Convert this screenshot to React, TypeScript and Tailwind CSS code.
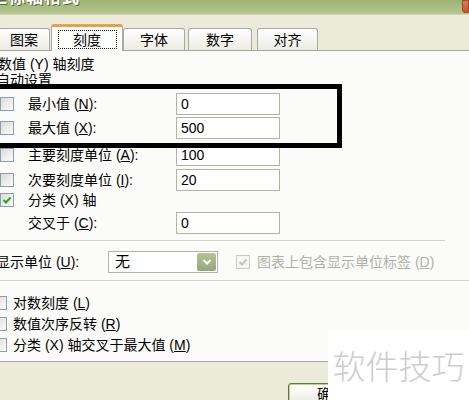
import React from "react";

function Box({ checked = false, disabled = false, className = "" }: { checked?: boolean; disabled?: boolean; className?: string }) {
  return (
    <div
      className={`w-[14px] h-[14px] shrink-0 border flex items-center justify-center ${
        disabled ? "border-[#c9cbc2] bg-[#f6f6f2]" : "border-[#8b9db1] bg-linear-to-br from-[#dcdcd6] to-[#fbfbf9]"
      } ${className}`}
    >
      {checked && (
        <svg width="10" height="10" viewBox="0 0 10 10">
          <path
            d="M1.5 5 L4 7.5 L8.5 2.5"
            fill="none"
            stroke={disabled ? "#c3c6bb" : "#2aa52a"}
            strokeWidth="2"
          />
        </svg>
      )}
    </div>
  );
}

function Field({ value }: { value: string }) {
  return (
    <div className="ml-auto w-[104px] h-[22px] border border-[#b2b59c] bg-white flex items-center pl-[4px] text-[14px] text-black">
      {value}
    </div>
  );
}

function Tab({ label, w, ml }: { label: string; w: string; ml: string }) {
  return (
    <div
      className={`${w} ${ml} h-[22px] border border-b-0 border-[#a5aaa6] rounded-t-[3px] bg-linear-to-b from-white to-[#ecebe4] flex items-center justify-center text-[14px] text-black`}
    >
      {label}
    </div>
  );
}

export default function App() {
  return (
    <div className="relative w-[469px] h-[400px] overflow-hidden bg-[#ecead9] font-[family-name:'Liberation_Sans','Noto_Sans_CJK_SC',sans-serif] leading-[14px]">
      {/* Title bar */}
      <div className="relative h-[15px] overflow-hidden bg-linear-to-b from-[#9cb276] to-[#b7c690] border-b border-[#cfd6b0]">
        <div className="ml-[-10px] mt-[-11px] text-[17px] leading-[17px] font-bold text-white [text-shadow:1px_1px_0_#5d6b3c] tracking-[1px]">
          坐标轴格式
        </div>
        <div className="absolute right-0 top-0 w-[7px] h-[13px] rounded-bl-[3px] bg-linear-to-b from-[#e07a50] to-[#c8552e] border border-[#a24a2a]" />
      </div>

      {/* Tab strip */}
      <div className="h-[35px] flex items-end">
        <Tab label="图案" w="w-[52px]" ml="ml-[-2px]" />
        <div className="relative z-10 mb-[-1px] ml-[1px] w-[72px] h-[27px] rounded-t-[3px] border-x border-[#a5aaa6] border-t-[3px] border-t-[#e8a04a] bg-[#fcfcfa] flex items-start justify-center">
          <div className="mt-[3px] w-[59px] h-[19px] border border-dotted border-[#222] flex items-center justify-center text-[14px] text-black">
            刻度
          </div>
        </div>
        <Tab label="字体" w="w-[62px]" ml="ml-0" />
        <Tab label="数字" w="w-[64px]" ml="ml-[3px]" />
        <Tab label="对齐" w="w-[61px]" ml="ml-[5px]" />
      </div>

      {/* Panel */}
      <div className="h-[312px] border-t border-b border-[#a3a79c] bg-[#fbfbf9] flex flex-col text-[14px] text-black">
        <div className="mt-[6px] h-[14px] ml-[-2px] whitespace-nowrap">数值 (Y) 轴刻度</div>
        <div className="mt-[2px] h-[14px] ml-[-4px] whitespace-nowrap">自动设置</div>

        <div className="mt-[6px] h-[22px] w-[280px] flex items-center">
          <Box />
          <span className="ml-[14px] whitespace-nowrap">
            最小值 (<span className="underline">N</span>):
          </span>
          <Field value="0" />
        </div>
        <div className="mt-[2px] h-[22px] w-[280px] flex items-center">
          <Box />
          <span className="ml-[14px] whitespace-nowrap">
            最大值 (<span className="underline">X</span>):
          </span>
          <Field value="500" />
        </div>
        <div className="mt-[5px] h-[22px] w-[280px] flex items-center">
          <Box />
          <span className="ml-[14px] whitespace-nowrap">
            主要刻度单位 (<span className="underline">A</span>):
          </span>
          <Field value="100" />
        </div>
        <div className="mt-[3px] h-[22px] w-[280px] flex items-center">
          <Box />
          <span className="ml-[14px] whitespace-nowrap">
            次要刻度单位 (<span className="underline">I</span>):
          </span>
          <Field value="20" />
        </div>
        <div className="mt-[1px] h-[16px] flex items-center">
          <Box checked />
          <span className="ml-[14px] whitespace-nowrap">分类 (X) 轴</span>
        </div>
        <div className="mt-[4px] h-[22px] w-[280px] flex items-center">
          <span className="ml-[28px] whitespace-nowrap">
            交叉于 (<span className="underline">C</span>):
          </span>
          <Field value="0" />
        </div>

        <div className="mt-[6px] h-px w-[445px] bg-[#d3d3c6]" />

        <div className="mt-[10px] h-[22px] flex items-center">
          <span className="ml-[-4px] w-[112px] whitespace-nowrap">
            显示单位 (<span className="underline">U</span>):
          </span>
          <div className="w-[110px] h-[22px] border border-[#b2b59c] bg-white flex items-center">
            <span className="ml-[6px] text-[15px]">无</span>
            <div className="ml-auto mr-[1px] w-[19px] h-[18px] rounded-[2px] bg-linear-to-b from-[#b5c49a] to-[#93a679] flex items-center justify-center">
              <svg width="10" height="8" viewBox="0 0 10 8">
                <path d="M1.5 2 L5 5.5 L8.5 2" fill="none" stroke="white" strokeWidth="2" />
              </svg>
            </div>
          </div>
          <Box checked disabled className="ml-[18px]" />
          <span className="ml-[7px] whitespace-nowrap text-[#b0b2a8]">
            图表上包含显示单位标签 (<span className="underline">D</span>)
          </span>
        </div>

        <div className="mt-[7px] h-px w-full bg-[#d3d3c6]" />

        <div className="mt-[11px] h-[21px] flex items-center">
          <Box className="ml-[-7px]" />
          <span className="ml-[6px] whitespace-nowrap">
            对数刻度 (<span className="underline">L</span>)
          </span>
        </div>
        <div className="h-[21px] flex items-center">
          <Box className="ml-[-7px]" />
          <span className="ml-[6px] whitespace-nowrap">
            数值次序反转 (<span className="underline">R</span>)
          </span>
        </div>
        <div className="h-[21px] flex items-center">
          <Box className="ml-[-7px]" />
          <span className="ml-[6px] whitespace-nowrap">
            分类 (X) 轴交叉于最大值 (<span className="underline">M</span>)
          </span>
        </div>
      </div>

      {/* Bottom button */}
      <div className="flex">
        <div className="ml-[288px] mt-[21px] w-[86px] h-[24px] rounded-[3px] border border-[#5c7a3a] bg-linear-to-b from-white to-[#e8e8df] shadow-[inset_0_0_0_1px_#b9d08e] flex items-start justify-center pt-[3px] text-[14px] text-black">
          确定
        </div>
      </div>

      {/* Annotation rectangle */}
      <div className="absolute left-[-10px] top-[84px] w-[352px] h-[64px] border-[5px] border-black" />

      {/* Watermark */}
      <div className="absolute left-[328px] top-[330px] w-[141px] h-[70px] bg-white flex items-center justify-center">
        <span className="text-[33px] leading-[36px] text-[#cdcdcd] font-[family-name:'Noto_Sans_CJK_SC',sans-serif] font-light">
          软件技巧
        </span>
      </div>
    </div>
  );
}
